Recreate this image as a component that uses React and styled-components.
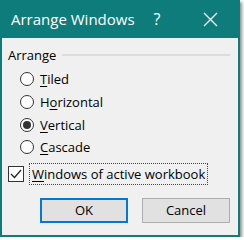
import styled, { createGlobalStyle } from "styled-components";

const Global = createGlobalStyle`
  body {
    margin: 0;
    background: #ffffff;
    font-family: "Open Sans", "Noto Sans", sans-serif;
  }
`;

const Window = styled.div`
  width: 240px;
  height: 237px;
  box-sizing: border-box;
  border: 2px solid #0f7c7c;
  border-top: none;
  background: #f0f0f0;
  display: flex;
  flex-direction: column;
  box-shadow: 2px 2px 3px rgba(0, 0, 0, 0.45);
`;

const TitleBar = styled.div`
  height: 38px;
  margin: 0 -2px;
  background: #0f7c7c;
  color: #ffffff;
  display: flex;
  align-items: center;
  padding: 0 7px 0 11px;
  font-size: 15px;
  white-space: nowrap;
`;

const Title = styled.div`
  flex: 1;
  min-width: 0;
`;

const TitleBtn = styled.div`
  flex-shrink: 0;
  width: ${(p) => p.w}px;
  display: flex;
  justify-content: center;
  align-items: center;
  font-size: 16px;
`;

const Body = styled.div`
  flex: 1;
  padding: 8px 6px 0 6px;
  display: flex;
  flex-direction: column;
  font-size: 13px;
  color: #000;
`;

const GroupHead = styled.div`
  display: flex;
  align-items: center;
  gap: 6px;
  height: 18px;
`;

const GroupLine = styled.div`
  flex: 1;
  height: 2px;
  background: #dcdcdc;
  margin-right: 2px;
`;

const RadioList = styled.div`
  display: flex;
  flex-direction: column;
  padding: 4px 0 0 12px;
`;

const Row = styled.label`
  display: flex;
  align-items: center;
  gap: 6px;
  height: 22.7px;
`;

const Circle = styled.span`
  width: 14px;
  height: 14px;
  box-sizing: border-box;
  border: 1px solid #333;
  border-radius: 50%;
  background: #fff;
  display: flex;
  align-items: center;
  justify-content: center;

  &::after {
    content: "";
    width: 8px;
    height: 8px;
    border-radius: 50%;
    background: ${(p) => (p.checked ? "#333" : "transparent")};
  }
`;

const U = styled.span`
  text-decoration: underline;
  text-underline-offset: 2px;
`;

const CheckRow = styled.div`
  display: flex;
  align-items: center;
  gap: 6px;
  margin-top: 5px;
`;

const Box = styled.span`
  width: 16px;
  height: 16px;
  box-sizing: border-box;
  border: 1px solid #333;
  background: #fff;
  display: flex;
  align-items: center;
  justify-content: center;
`;

const Focus = styled.span`
  outline: 1px dotted #444;
  padding: 1px 2px;
`;

const Buttons = styled.div`
  display: flex;
  justify-content: flex-end;
  gap: 14px;
  margin-top: 14px;
  padding-right: 2px;
`;

const Button = styled.div`
  width: 88px;
  height: 25px;
  box-sizing: border-box;
  background: #e1e1e1;
  border: ${(p) => (p.primary ? "2px solid #0078d7" : "1px solid #adadad")};
  display: flex;
  align-items: center;
  justify-content: center;
  font-size: 13px;
`;

const radios = [
  { pre: "", u: "T", post: "iled" },
  { pre: "H", u: "o", post: "rizontal" },
  { pre: "", u: "V", post: "ertical", checked: true },
  { pre: "", u: "C", post: "ascade" },
];

export default function App() {
  return (
    <>
      <Global />
      <Window>
        <TitleBar>
          <Title>Arrange Windows</Title>
          <TitleBtn w={60}>?</TitleBtn>
          <TitleBtn w={46}>
            <svg width="15" height="15" viewBox="0 0 15 15">
              <path d="M1 1 L14 14 M14 1 L1 14" stroke="#fff" strokeWidth="1.3" />
            </svg>
          </TitleBtn>
        </TitleBar>
        <Body>
          <GroupHead>
            <span>Arrange</span>
            <GroupLine />
          </GroupHead>
          <RadioList>
            {radios.map((r) => (
              <Row key={r.post}>
                <Circle checked={r.checked} />
                <span>
                  {r.pre}
                  <U>{r.u}</U>
                  {r.post}
                </span>
              </Row>
            ))}
          </RadioList>
          <CheckRow>
            <Box>
              <svg width="12" height="12" viewBox="0 0 12 12">
                <path d="M1 6 L4.5 9.5 L11 2" fill="none" stroke="#222" strokeWidth="1.2" />
              </svg>
            </Box>
            <Focus>
              <U>W</U>indows of active workbook
            </Focus>
          </CheckRow>
          <Buttons>
            <Button primary>OK</Button>
            <Button>Cancel</Button>
          </Buttons>
        </Body>
      </Window>
    </>
  );
}
